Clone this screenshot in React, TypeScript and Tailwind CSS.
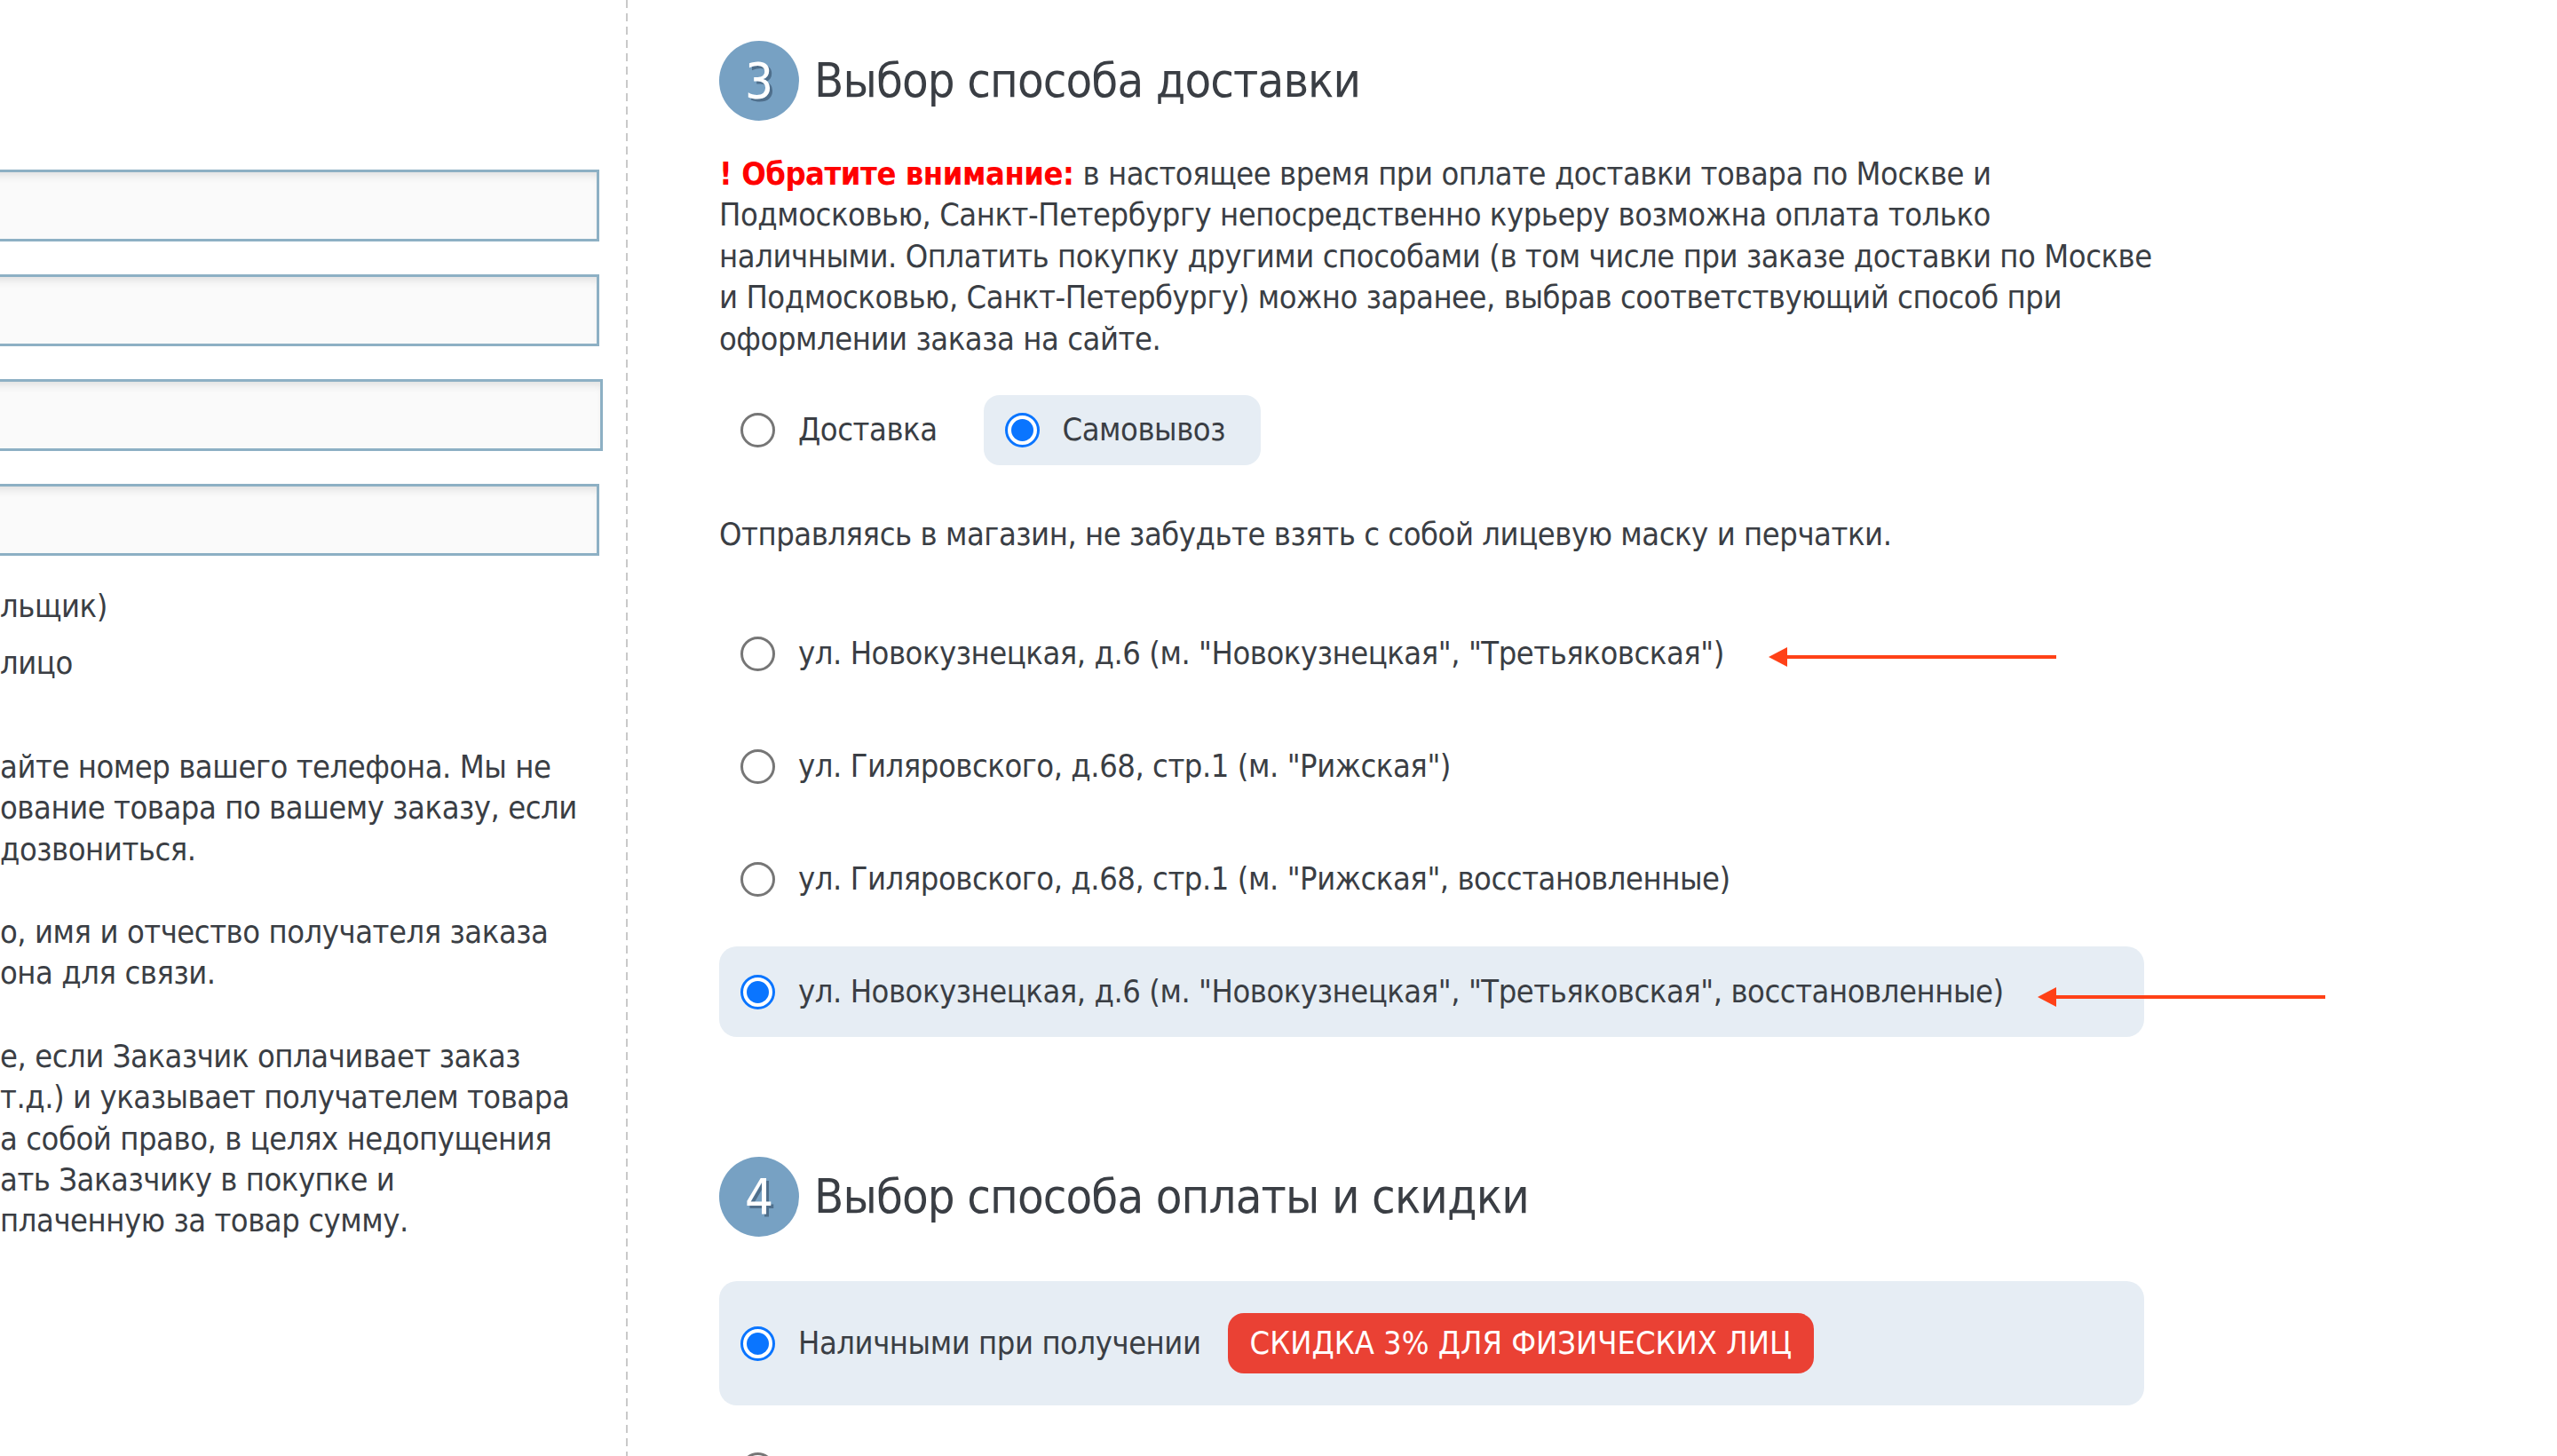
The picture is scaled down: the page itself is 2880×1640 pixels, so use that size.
import React from "react";

const FONT = "font-['DejaVu_Sans_Condensed','DejaVu_Sans',sans-serif] [font-stretch:condensed]";

function Radio({ checked }: { checked?: boolean }) {
  if (checked) {
    return (
      <span className="w-[39px] h-[39px] shrink-0 rounded-full border-[3px] border-[#0a75ff] bg-white flex items-center justify-center">
        <span className="w-[25px] h-[25px] rounded-full bg-[#0a75ff]" />
      </span>
    );
  }
  return <span className="w-[39px] h-[39px] shrink-0 rounded-full border-[3px] border-[#767676] bg-white" />;
}

function Arrow({ className }: { className: string }) {
  return (
    <svg className={className} width="324" height="22" viewBox="0 0 324 22">
      <polygon points="0,11 21,0 21,22" fill="#ff4117" />
      <rect x="18" y="9" width="306" height="4" fill="#ff4117" />
    </svg>
  );
}

function NumberBadge({ n }: { n: string }) {
  return (
    <div className="w-[90px] h-[90px] shrink-0 rounded-full bg-[#77a1c3] flex items-center justify-center text-white text-[56px] leading-none tracking-normal [text-shadow:3px_3px_0_#4f6f8c]">
      {n}
    </div>
  );
}

function Input({ extra }: { extra?: string }) {
  return (
    <div
      className={
        "h-[81px] -ml-[20px] border-[3px] border-[#8db0c4] bg-[#fafafa] shadow-[inset_0_8px_10px_-4px_rgba(0,0,0,0.10)] " +
        (extra ?? "")
      }
    />
  );
}

export default function App() {
  const leftParas: string[][] = [
    ["айте номер вашего телефона. Мы не", "ование товара по вашему заказу, если", "дозвониться."],
    ["о, имя и отчество получателя заказа", "она для связи."],
    [
      "е, если Заказчик оплачивает заказ",
      "т.д.) и указывает получателем товара",
      "а собой право, в целях недопущения",
      "ать Заказчику в покупке и",
      "плаченную за товар сумму.",
    ],
  ];

  const addresses = [
    'ул. Новокузнецкая, д.6 (м. "Новокузнецкая", "Третьяковская")',
    'ул. Гиляровского, д.68, стр.1 (м. "Рижская")',
    'ул. Гиляровского, д.68, стр.1 (м. "Рижская", восстановленные)',
    'ул. Новокузнецкая, д.6 (м. "Новокузнецкая", "Третьяковская", восстановленные)',
  ];

  return (
    <div
      className={
        "w-[2880px] h-[1640px] overflow-hidden bg-white flex text-[#3a3e44] text-[36px] tracking-[-0.45px] leading-[46.4px] " +
        FONT
      }
    >
      {/* Left column */}
      <div className="w-[705px] shrink-0 overflow-hidden pr-[30px] pt-[191px]">
        <div className="flex flex-col gap-[37px]">
          <Input />
          <Input />
          <Input extra="-mr-[4px]" />
          <Input />
        </div>
        <div className="mt-[34px] flex flex-col gap-[18px] whitespace-nowrap">
          <div>льщик)</div>
          <div>лицо</div>
        </div>
        <div className="mt-[70px] flex flex-col gap-[47px] whitespace-nowrap">
          {leftParas.map((p, i) => (
            <div key={i}>
              {p.map((l, j) => (
                <div key={j}>{l}</div>
              ))}
            </div>
          ))}
        </div>
      </div>

      {/* Divider */}
      <div className="w-[2px] shrink-0 h-full bg-[linear-gradient(to_bottom,#c9c9c9_9px,transparent_9px)] bg-[length:2px_15px]" />

      {/* Right column */}
      <div className="relative pl-[103px] pt-[46px] w-[1708px] shrink-0">
        {/* Section 3 header */}
        <div className="flex items-center gap-[17px] h-[90px]">
          <NumberBadge n="3" />
          <h2 className="text-[54px] tracking-[-0.9px] leading-none text-[#3a3e44] font-normal">Выбор способа доставки</h2>
        </div>

        {/* Notice */}
        <div className="mt-[37px] whitespace-nowrap">
          <div>
            <span className="font-bold text-[#ff0000]">! Обратите внимание:</span> в настоящее время при оплате доставки товара по Москве и
          </div>
          <div>Подмосковью, Санкт-Петербургу непосредственно курьеру возможна оплата только</div>
          <div>наличными. Оплатить покупку другими способами (в том числе при заказе доставки по Москве</div>
          <div>и Подмосковью, Санкт-Петербургу) можно заранее, выбрав соответствующий способ при</div>
          <div>оформлении заказа на сайте.</div>
        </div>

        {/* Delivery type */}
        <div className="mt-[40px] flex gap-[12px]">
          <div className="h-[79px] pl-[24px] pr-[40px] flex items-center gap-[26px] rounded-[18px]">
            <Radio />
            <span>Доставка</span>
          </div>
          <div className="h-[79px] pl-[24px] pr-[40px] flex items-center gap-[26px] rounded-[18px] bg-[#e6edf4]">
            <Radio checked />
            <span>Самовывоз</span>
          </div>
        </div>

        <p className="mt-[55px] whitespace-nowrap">
          Отправляясь в магазин, не забудьте взять с собой лицевую маску и перчатки.
        </p>

        {/* Pickup addresses */}
        <div className="mt-[60px] flex flex-col gap-[25px] w-[1605px]">
          {addresses.map((a, i) => (
            <div
              key={i}
              className={
                "relative h-[102px] px-[24px] flex items-center gap-[26px] rounded-[20px] whitespace-nowrap " +
                (i === 3 ? "bg-[#e6edf4]" : "")
              }
            >
              <Radio checked={i === 3} />
              <span>{a}</span>
              {i === 0 && <Arrow className="absolute left-[1182px] top-[44px]" />}
              {i === 3 && <Arrow className="absolute left-[1485px] top-[46px]" />}
            </div>
          ))}
        </div>

        {/* Section 4 header */}
        <div className="mt-[135px] flex items-center gap-[17px] h-[90px]">
          <NumberBadge n="4" />
          <h2 className="text-[54px] tracking-[-0.9px] leading-none text-[#3a3e44] font-normal">Выбор способа оплаты и скидки</h2>
        </div>

        {/* Payment */}
        <div className="mt-[50px] w-[1605px] h-[140px] px-[24px] flex items-center gap-[26px] rounded-[20px] bg-[#e6edf4] whitespace-nowrap">
          <Radio checked />
          <span>Наличными при получении</span>
          <span className="ml-[4px] h-[68px] px-[25px] flex items-center rounded-[18px] bg-[#ea4134] text-white tracking-normal">
            СКИДКА 3% ДЛЯ ФИЗИЧЕСКИХ ЛИЦ
          </span>
        </div>
        <div className="mt-[21px] w-[1605px] h-[102px] px-[24px] flex items-center">
          <Radio />
        </div>
      </div>
    </div>
  );
}
